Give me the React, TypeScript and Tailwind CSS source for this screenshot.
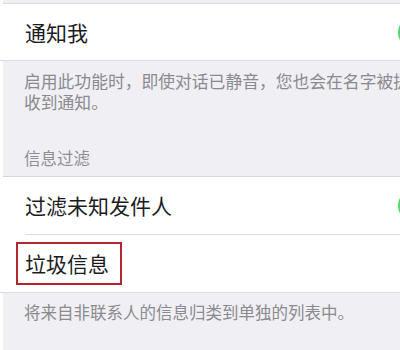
import React from 'react';

const Toggle = () => (
  <div className="ml-auto mr-[11px] h-[31px] w-[51px] shrink-0 rounded-full bg-[#4cd964] relative">
    <div className="absolute right-[2px] top-[2px] h-[27px] w-[27px] rounded-full bg-white shadow" />
  </div>
);

export default function App() {
  return (
    <div className="w-[400px] h-[350px] overflow-hidden bg-white" style={{ fontFamily: '"Noto Sans CJK SC", "Noto Sans", sans-serif' }}>
      <div className="w-[460px]">
        <div className="h-[4px] ml-[3px] bg-[#efeff4] border-b border-[#dcdce0]" />

        <div className="h-[57px] flex items-center pl-[25px] border-b border-[#d8d8dc]">
          <span className="text-[21px] leading-none text-[#1c1c1e]">通知我</span>
          <Toggle />
        </div>

        <div className="ml-[3px] bg-[#efeff4] border-b border-[#d8d8dc] pt-[10px] pb-[7px] pl-[21px] leading-[21px]">
          <div className="text-[16.8px] text-[#8a8a8f] whitespace-nowrap">启用此功能时，即使对话已静音，您也会在名字被提及时</div>
          <div className="text-[16.8px] text-[#8a8a8f] whitespace-nowrap">收到通知。</div>
          <div className="mt-[35px] text-[16.5px] text-[#8e8e93]">信息过滤</div>
        </div>

        <div className="pl-[25px]">
          <div className="h-[58px] flex items-center border-b border-[#dcdce0]">
            <span className="text-[21px] leading-none text-[#1c1c1e]">过滤未知发件人</span>
            <Toggle />
          </div>
        </div>

        <div className="h-[58px] flex items-center pl-[16px] border-b border-[#d8d8dc]">
          <span className="inline-flex items-center h-[43px] w-[106px] pl-[7px] border-2 border-[#b3262d] text-[21px] leading-none text-[#1c1c1e]">
            垃圾信息
          </span>
        </div>

        <div className="ml-[3px] h-[80px] bg-[#efeff4] pt-[9px] pl-[21px] text-[16.5px] leading-[21px] text-[#8a8a8f] whitespace-nowrap">
          将来自非联系人的信息归类到单独的列表中。
        </div>
      </div>
    </div>
  );
}
